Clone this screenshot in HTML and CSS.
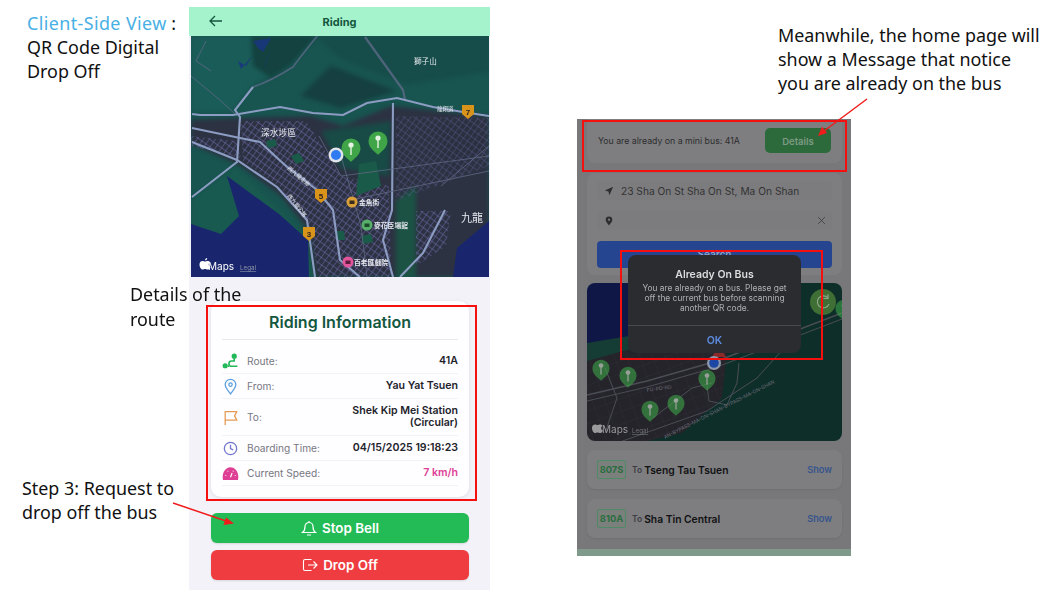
FILE: index.html
```html
<!DOCTYPE html>
<html lang="en">
<head>
    <meta charset="UTF-8">
    <meta name="viewport" content="width=device-width, initial-scale=1.0">
    <title>QR Code Digital Drop Off</title>
    <link rel="stylesheet" href="styles.css">
</head>
<body>
    <svg class="defs" width="0" height="0">
        <defs>
            <symbol id="pin" viewBox="0 0 20 24">
                <path d="M10 24 C8.500 21.500 0.500 18 0.500 10 A9.500 9.500 0 0 1 19.500 10 C19.500 18 11.500 21.500 10 24Z" fill="#3fa548"/>
                <circle cx="10" cy="7" r="2.600" fill="#e4f3e2"/>
                <rect x="9.300" y="8" width="1.400" height="9" fill="#e4f3e2"/>
            </symbol>
            <pattern id="streets" width="5" height="6" patternUnits="userSpaceOnUse" patternTransform="rotate(36)">
                <path d="M0 0H5M0 0V6" stroke="#7a70b8" stroke-width=".9" fill="none"/>
            </pattern>
            <pattern id="streets-dim" width="12" height="12" patternUnits="userSpaceOnUse" patternTransform="rotate(-20)">
                <path d="M0 0H12M0 0V12" stroke="#33333a" stroke-width=".6" fill="none"/>
            </pattern>
        </defs>
    </svg>

    <p class="note note-title"><span class="note-link">Client-Side View</span> :<br>QR Code Digital<br>Drop Off</p>
    <p class="note note-step">Step 3: Request to<br>drop off the bus</p>
    <p class="note note-home">Meanwhile, the home page will<br>show a Message that notice<br>you are already on the bus</p>

    <!-- riding screen -->
    <section class="phone riding">
        <header class="top-bar">
            <svg class="back" viewBox="0 0 14 12" width="14" height="12"><path d="M13 6H1.500M6 1 1 6l5 5" fill="none" stroke="#14573f" stroke-width="1.300"/></svg>
            <span>Riding</span>
        </header>
        <div class="map">
            <svg viewBox="0 0 298 241" width="298" height="241">
                <rect width="298" height="241" fill="#185450"/>
                <g class="soft">
                    <path d="M0 0H120L100 25 60 50 40 75H0Z" fill="#1a5c58"/>
                    <path d="M60 0H125L100 28 80 42 62 30Z" fill="#134240"/>
                    <path d="M125 0H298V35L215 48 150 22Z" fill="#164c49"/>
                    <path d="M140 30 L205 55 L150 72 L110 60Z" fill="#153f40"/>
                    <path d="M44 82 L120 80 L152 90 L200 70 L298 80 V241 H124 L118 195 L90 160 L50 130 L0 108 V84Z" fill="#2c3242"/>
                    <path d="M130 95 L200 85 L198 140 L150 132Z" fill="#184a46"/>
                    <path d="M0 165 L45 132 L115 200 L124 241 H0Z" fill="#195a50"/>
                    <path d="M205 165 L225 150 L225 241 H205Z" fill="#1b5244"/>
                    <path d="M240 90 L280 85 L298 110 L260 140Z" fill="#2a3040"/>
                </g>
                <path d="M62 5 L80 2 L72 16 L67 12Z M47 25 L55 30 L61 20 L50 33Z M75 25 L80 15 L72 33Z" fill="#1a3580" opacity=".85"/>
                <path d="M50 85 L115 85 L150 140 L198 150 L200 241 L128 241 L118 190 L88 150 L52 125Z" fill="url(#streets)"/>
                <path d="M205 80 L298 82 V130 L245 150 L205 165Z" fill="url(#streets)" opacity=".6"/>
                <path d="M225 175 L260 175 L255 210 L225 230Z" fill="url(#streets)"/>
                <path d="M0 100 L45 105 L50 122 L0 110Z" fill="url(#streets)"/>
                <path d="M168 128 L185 125 L190 150 L165 160Z" fill="#1a5a48"/>
                <path d="M100 120l8-3 5 8-8 3zM75 105l9-2 2 7-9 2zM170 200l10-2 2 8-10 2zM145 195l8 0 1 9-8 0z" fill="#1a5a48"/>
                <path d="M36 140 L88 178 L117 204 L118 241 H0 V188 L30 198 L48 180Z" fill="#19266e"/>
                <path d="M298 185 L266 212 L262 241 H298Z" fill="#19266e"/>
                <g fill="none" stroke="#5c6a88" stroke-width="1.600" opacity=".8">
                    <path d="M127 -1 Q110 20 102 31 Q80 45 62 51"/>
                    <path d="M174 1 L212 54 L214 64" stroke-width="2.200"/>
                </g>
                <g fill="none" stroke="#8c9cc2" stroke-width="2.100">
                    <path d="M62 51 L44 74 L49 81 L46 126 L1 161"/>
                    <path d="M1 78 L9 79 L42 79 L89 71 L122 77 L152 79 L176 67 L206 62 L242 71 L272 76 L298 80"/>
                    <path d="M1 92 L49 102 L69 106 L96 131 L126 154 L142 174 L149 224 L169 241"/>
                    <path d="M1 106 L46 124 L86 151 L116 184 L124 241"/>
                    <path d="M202 67 L201 174 L192 204 L202 241"/>
                    <path d="M254 174 L232 217 L209 241"/>
                </g>
                <g fill="none" stroke="#5f6885" stroke-width=".8">
                    <path d="M128 100 L150 140 L298 120"/>
                    <path d="M155 165 L298 135"/>
                    <path d="M150 120 L170 190 L176 241"/>
                    <path d="M250 150 L298 110"/>
                    <path d="M0 40 L30 65 L44 78"/>
                    <path d="M15 5 L5 25 L20 35"/>
                </g>
                <g class="shield">
                    <path d="M271 69h12v9l-6 5-6-5z" fill="#d8941a"/><text x="277" y="79">7</text>
                    <path d="M124 153h12v9l-6 5-6-5z" fill="#d8941a"/><text x="130" y="163">5</text>
                    <path d="M112 191h12v9l-6 5-6-5z" fill="#d8941a"/><text x="118" y="201">3</text>
                </g>
                <text class="map-label big" x="70" y="100">深水埗區</text>
                <text class="map-label" x="223" y="28">獅子山</text>
                <text class="map-label huge" x="270" y="186">九龍</text>
                <text class="map-label road" transform="translate(96 133) rotate(40)">西九龍走廊</text>
                <text class="map-label road" transform="translate(96 160) rotate(52)">西九龍公路</text>
                <text class="map-label road" x="246" y="75">龍翔道</text>
                <circle cx="161" cy="166" r="5.500" fill="#d9a03a"/><rect x="158.500" y="164.500" width="5" height="3.500" fill="#3a2c1a"/><text class="map-label poi" x="168" y="169">金魚街</text>
                <circle cx="176" cy="189" r="5.500" fill="#56b06a"/><rect x="173.500" y="187.500" width="5" height="3.500" fill="#1c4a2a"/><text class="map-label poi" x="183" y="192">麥花臣場館</text>
                <circle cx="157" cy="226" r="5.500" fill="#e2559b"/><rect x="154.500" y="224.500" width="5" height="3.500" fill="#5a1c3e"/><text class="map-label poi" x="163" y="229">百老匯戲院</text>
                <use href="#pin" x="150" y="102" width="20" height="24"/>
                <use href="#pin" x="177" y="95" width="20" height="24"/>
                <circle cx="145" cy="119" r="7.500" fill="#dfe3ea"/>
                <circle cx="145" cy="119" r="5" fill="#2f7bf2"/>
                <g transform="translate(3.500 1.500)">
                    <path d="M13 232c-1 0-1.500-.600-2.500-.600s-1.500.600-2.500.600c-1.500 0-3-2.500-3-5s1.500-3.500 3-3.500c1 0 1.700.600 2.500.600s1.500-.600 2.700-.600c1 0 1.800.500 2.300 1.200-2 1.300-1.600 4 .500 4.900-.500 1.200-1.400 2.400-2.500 2.400zM10.500 222.800c0-1.300 1-2.300 2.200-2.400.100 1.300-1 2.500-2.200 2.400z" fill="#fff"/>
                </g>
                <text class="maps-word" x="17" y="234">Maps</text>
                <text class="legal" x="49" y="234">Legal</text>
            </svg>
        </div>
        <div class="riding-body">
            <div class="info-card">
                <h2>Riding Information</h2>
                <div class="info-row">
                    <svg class="row-icon" viewBox="0 0 16 16"><g fill="none" stroke="#22b85a" stroke-width="1.500"><circle cx="3" cy="12" r="1.700" fill="#22b85a"/><circle cx="11.500" cy="3" r="1.700" fill="#22b85a"/><path d="M11.500 5v2.500H9a2.200 2.200 0 0 0 0 5h5.500M5.500 12.500h1"/></g></svg>
                    <span class="row-label">Route:</span><span class="row-value">41A</span>
                </div>
                <div class="info-row">
                    <svg class="row-icon" viewBox="0 0 16 16"><g fill="none" stroke="#5b9fe0" stroke-width="1.200"><path d="M8 15C6 12 3 9.500 3 6.200a5 5 0 0 1 10 0C13 9.500 10 12 8 15Z"/><circle cx="8" cy="6.200" r="1.600"/></g></svg>
                    <span class="row-label">From:</span><span class="row-value">Yau Yat Tsuen</span>
                </div>
                <div class="info-row">
                    <svg class="row-icon" viewBox="0 0 16 16"><path d="M3 15V2.500H14L11.800 6.500 14 10.500H3" fill="none" stroke="#e59a52" stroke-width="1.200" stroke-linejoin="round"/></svg>
                    <span class="row-label">To:</span><span class="row-value">Shek Kip Mei Station<br>(Circular)</span>
                </div>
                <div class="info-row">
                    <svg class="row-icon" viewBox="0 0 16 16"><g fill="none" stroke="#7277cc" stroke-width="1.200"><circle cx="8" cy="8" r="5.800"/><path d="M8 4.500V8l2.500 1.300"/></g></svg>
                    <span class="row-label">Boarding Time:</span><span class="row-value">04/15/2025 19:18:23</span>
                </div>
                <div class="info-row">
                    <svg class="row-icon" viewBox="0 0 16 16"><path d="M1 14C-.5 8 3 2 8 2s8.500 6 7 12Z" fill="#de3f95"/><path d="M8 11.500l1.500-4M3.500 9.500v.6M12.500 9.500v.6M5.500 5.500v.6M10.500 5.500v.6" stroke="#fff" stroke-width="1.100"/></svg>
                    <span class="row-label">Current Speed:</span><span class="row-value speed">7 km/h</span>
                </div>
            </div>
            <button class="action stop">
                <svg viewBox="0 0 16 16" width="16" height="16"><path d="M1.500 12.500c1.500-1 2.500-2.500 2.500-6a4 4 0 0 1 8 0c0 3.500 1 5 2.500 6ZM6 15h4M8 1v1.500" fill="none" stroke="#fff" stroke-width="1.200"/></svg>
                Stop Bell
            </button>
            <button class="action drop">
                <svg viewBox="0 0 16 16" width="16" height="16"><path d="M9.500 2.500H3a1.500 1.500 0 0 0-1.500 1.500v8A1.500 1.500 0 0 0 3 13.500h6.500M6 8h9M11.500 4.500 15 8l-3.500 3.500" fill="none" stroke="#fff" stroke-width="1.100"/></svg>
                Drop Off
            </button>
        </div>
    </section>

    <p class="note note-route">Details of the<br>route</p>

    <!-- home screen behind the alert -->
    <section class="phone home">
        <div class="banner">
            <span>You are already on a mini bus: 41A</span>
            <span class="details-btn">Details</span>
        </div>
        <div class="search-card">
            <div class="field">
                <svg viewBox="0 0 12 12" width="10" height="10"><path d="M11 1 6.500 11 5.300 6.700 1 5.500Z" fill="#2d2d2f"/></svg>
                <span>23 Sha On St Sha On St, Ma On Shan</span>
            </div>
            <div class="field">
                <svg viewBox="0 0 12 12" width="10" height="12"><path d="M6 11.500C4.500 9 2 7 2 4.500a4 4 0 0 1 8 0C10 7 7.500 9 6 11.500Z" fill="#2d2d2f"/><circle cx="6" cy="4.500" r="1.400" fill="#77777a"/></svg>
                <svg class="clear" viewBox="0 0 12 12" width="9" height="9"><path d="M1.500 1.500l9 9M10.500 1.500l-9 9" stroke="#3a3a3c" stroke-width="1.100"/></svg>
            </div>
            <div class="search-btn">Search</div>
        </div>
        <div class="map home-map">
            <svg viewBox="0 0 255 158" width="255" height="158">
                <rect width="255" height="158" fill="#0e2e2a"/>
                <path d="M0 0 H120 L60 50 L0 76Z" fill="#0e1746"/>
                <path d="M0 78 L120 40 L140 70 L135 115 L95 150 L60 158 H0Z" fill="#25242b"/>
                <path d="M0 78 L120 40 L140 70 L135 115 L95 150 L60 158 H0Z" fill="url(#streets-dim)"/>
                <path d="M0 60 L60 50 L120 10 V45 L0 78Z" fill="#163d35"/>
                <g fill="none" stroke="#4b4d55" stroke-width="1">
                    <path d="M0 112 L60 98 L130 78 L255 30" stroke-width="1.400"/>
                    <path d="M0 118 L60 104 L130 84 L255 36"/>
                    <path d="M18 85 L30 115 L18 150"/>
                    <path d="M66 135 L105 105 L125 100"/>
                    <path d="M30 160 L120 128 L170 95 L215 45"/>
                    <path d="M120 103 L122 118 L140 122 L150 100 L152 80"/>
                </g>
                <text class="bypass" transform="translate(78 156) rotate(-27)">AN-BYPASS-MA-ON-SHAN-BYPASS-MA-ON-SHAN</text>
                <text class="bypass" transform="translate(60 109) rotate(-8)">FU-PO-RD</text>
                <path d="M125 74l5-9h4l5 9Z" fill="#8c2a2a"/>
                <circle cx="127" cy="80" r="7" fill="#8f98ab"/>
                <circle cx="127" cy="80" r="4.800" fill="#1c47a4"/>
                <g class="dim-pins">
                    <use href="#pin" x="5" y="76" width="18" height="22"/>
                    <use href="#pin" x="32" y="83" width="18" height="22"/>
                    <use href="#pin" x="111" y="86" width="18" height="22"/>
                    <use href="#pin" x="80" y="111" width="18" height="22"/>
                    <use href="#pin" x="54" y="117" width="18" height="22"/>
                    <use href="#pin" x="248" y="16" width="18" height="22"/>
                </g>
                <circle cx="236" cy="19" r="13" fill="#3f6f34"/>
                <path d="M241 15a6 6 0 1 0 1 6M241 11v4.500h-4.500" fill="none" stroke="#8fa78a" stroke-width="1.100"/>
                <path d="M13 150c-1 0-1.500-.600-2.500-.600s-1.500.600-2.500.600c-1.500 0-3-2.500-3-5s1.500-3.500 3-3.500c1 0 1.700.600 2.500.600s1.500-.600 2.700-.600c1 0 1.800.500 2.300 1.200-2 1.300-1.600 4 .500 4.900-.500 1.200-1.400 2.400-2.500 2.400z" fill="#9a9a9c"/>
                <text class="maps-word dim" x="15" y="150">Maps</text>
                <text class="legal dim" x="45" y="150">Legal</text>
            </svg>
        </div>
        <div class="route-row">
            <span class="route-code">807S</span>
            <span class="route-to">To</span>
            <span class="route-name">Tseng Tau Tsuen</span>
            <span class="route-show">Show</span>
        </div>
        <div class="route-row">
            <span class="route-code">810A</span>
            <span class="route-to">To</span>
            <span class="route-name">Sha Tin Central</span>
            <span class="route-show">Show</span>
        </div>
        <div class="tab-bar"></div>
    </section>

    <div class="alert">
        <div class="alert-body">
            <h3>Already On Bus</h3>
            <p>You are already on a bus. Please get<br>off the current bus before scanning<br>another QR code.</p>
        </div>
        <div class="alert-ok">OK</div>
    </div>

    <!-- red callouts -->
    <div class="callout callout-card"></div>
    <div class="callout callout-banner"></div>
    <div class="callout callout-alert"></div>
    <svg class="arrows" width="1051" height="590" viewBox="0 0 1051 590">
        <path d="M173 503 L226 521" stroke="#f01c1c" stroke-width="1.500"/>
        <path d="M234 523.500 L223.500 525 L226 517.500Z" fill="#f01c1c"/>
        <path d="M867 99 L824 131" stroke="#f01c1c" stroke-width="1.500"/>
        <path d="M818 136 L822 126.500 L827 133Z" fill="#f01c1c"/>
    </svg>
</body>
</html>
```

FILE: styles.css
```css
html, body {
    margin: 0;
    padding: 0;
}
body {
    position: relative;
    width: 1051px;
    height: 590px;
    overflow: hidden;
    background: #fff;
    font-family: Inter, "Liberation Sans", sans-serif;
}
.defs {
    position: absolute;
}

/* slide notes */
.note {
    position: absolute;
    margin: 0;
    font-family: "Noto Sans", sans-serif;
    font-size: 17.900px;
    line-height: 24px;
    color: #111;
}
.note-title { left: 27px; top: 11px; }
.note-link { color: #47b0e4; letter-spacing: 0.4px; }
.note-route { left: 130px; top: 282px; line-height: 25px; z-index: 2; }
.note-step { left: 22px; top: 476px; }
.note-home { left: 778px; top: 23px; }

/* phones */
.phone {
    position: absolute;
    display: flex;
    flex-direction: column;
    box-sizing: border-box;
    overflow: hidden;
}
.map {
    overflow: hidden;
}
.map svg {
    display: block;
    filter: blur(0.5px);
}
.soft {
    filter: blur(2px);
}

/* riding screen */
.riding {
    left: 189px;
    top: 7px;
    width: 301px;
    height: 583px;
    background: #f3f2f8;
}
.top-bar {
    position: relative;
    height: 29px;
    flex: none;
    display: flex;
    align-items: center;
    justify-content: center;
    background: #a5f3cd;
    color: #14573f;
    font-size: 11px;
    font-weight: 700;
}
.back {
    position: absolute;
    left: 20px;
    top: 8px;
}
.riding .map {
    height: 241px;
    flex: none;
    margin: 0 1px 0 2px;
}
.riding-body {
    padding: 24px 21px 0 22px;
    display: flex;
    flex-direction: column;
}
.info-card {
    height: 196px;
    box-sizing: border-box;
    padding: 9px 11px 0;
    background: #fefdff;
    border-radius: 10px;
    box-shadow: 0 1px 4px rgba(0, 0, 0, 0.09);
}
.info-card h2 {
    margin: 0;
    height: 29px;
    font-size: 16px;
    line-height: 24px;
    font-weight: 600;
    text-align: center;
    color: #14573f;
    border-bottom: 1px solid #e8e8ec;
}
.info-row {
    display: flex;
    align-items: center;
    padding: 6px 0;
    border-bottom: 1px solid #f3f3f6;
    font-size: 10.200px;
    line-height: 12px;
}
.info-card h2 + .info-row {
    margin-top: 9px;
}
.row-icon {
    width: 17px;
    height: 17px;
    margin: -3px 8px -3px 0;
    flex: none;
}
.row-label {
    color: #77787f;
}
.row-value {
    margin-left: auto;
    font-size: 10.600px;
    font-weight: 600;
    color: #22232b;
    text-align: right;
}
.row-value.speed {
    color: #de3f95;
}
.action {
    height: 30px;
    border: none;
    border-radius: 6px;
    display: flex;
    align-items: center;
    justify-content: center;
    gap: 5px;
    color: #fff;
    font-family: inherit;
    font-size: 13.400px;
    font-weight: 600;
    padding: 0;
    box-shadow: 0 1px 2px rgba(0, 0, 0, 0.12);
}
.stop {
    margin-top: 16px;
    background: #22bb55;
}
.drop {
    margin-top: 7px;
    background: #ee3c40;
}

/* home screen, dimmed by the alert */
.home {
    left: 577px;
    top: 119px;
    width: 274px;
    height: 437px;
    padding: 0 9px 0 10px;
    background: #78787b;
    filter: blur(0.35px);
}
.banner {
    height: 44px;
    flex: none;
    box-sizing: border-box;
    padding: 9px 11px 10px;
    display: flex;
    align-items: center;
    justify-content: space-between;
    background: #7e7e80;
    border-radius: 0 0 8px 8px;
    font-size: 8.750px;
    color: #2d2d2f;
}
.details-btn {
    width: 66px;
    height: 25px;
    border-radius: 5px;
    background: #2c6a3c;
    color: #7d9a83;
    font-size: 9.500px;
    font-weight: 600;
    text-align: center;
    line-height: 27px;
}
.search-card {
    margin-top: 10px;
    height: 102px;
    flex: none;
    box-sizing: border-box;
    padding: 8px 10px;
    display: flex;
    flex-direction: column;
    gap: 11px;
    background: #7e7e80;
    border-radius: 8px;
    overflow: hidden;
}
.field {
    height: 19px;
    flex: none;
    display: flex;
    align-items: center;
    gap: 7px;
    padding: 0 7px;
    background: #7c7c7e;
    border-radius: 4px;
    font-size: 10.200px;
    color: #333335;
}
.clear {
    margin-left: auto;
    margin-right: -1px;
}
.search-btn {
    height: 27px;
    flex: none;
    border-radius: 4px;
    background: #264590;
    color: #8ea0c6;
    font-size: 10px;
    font-weight: 600;
    text-align: center;
    line-height: 27px;
}
.home-map {
    margin-top: 8px;
    height: 158px;
    flex: none;
    border-radius: 8px;
}
.dim-pins {
    opacity: 0.6;
}
.route-row {
    margin-top: 9px;
    height: 39px;
    flex: none;
    box-sizing: border-box;
    padding: 0 10px;
    display: flex;
    align-items: center;
    background: #7e7e80;
    border-radius: 8px;
    box-shadow: 0 1px 2px rgba(0, 0, 0, 0.08);
}
.route-row + .route-row {
    margin-top: 10px;
}
.route-code {
    width: 27px;
    height: 17px;
    border: 1px solid #4f8a66;
    border-radius: 2px;
    background: #7c807d;
    color: #2a6e40;
    font-size: 9.300px;
    font-weight: 700;
    text-align: center;
    line-height: 18px;
}
.route-to {
    margin-left: 6px;
    font-size: 8.500px;
    font-weight: 600;
    color: #3d3d40;
}
.route-name {
    margin-left: 2px;
    font-size: 10.300px;
    font-weight: 600;
    color: #111113;
}
.route-show {
    margin-left: auto;
    font-size: 9.200px;
    font-weight: 600;
    color: #36548c;
}
.tab-bar {
    margin: auto -9px 0 -10px;
    height: 7px;
    flex: none;
    background: #7f9a8b;
}

/* alert sits over the home screen */
.alert {
    position: absolute;
    left: 628px;
    top: 255px;
    width: 173px;
    height: 98px;
    background: #2b2c2f;
    border-radius: 8px;
    display: flex;
    flex-direction: column;
    text-align: center;
    filter: blur(0.25px);
}
.alert-body {
    height: 71px;
    box-sizing: border-box;
    padding: 13px 6px 0;
    border-bottom: 1px solid #48494d;
}
.alert-body h3 {
    margin: 0 0 1px;
    font-size: 10.500px;
    line-height: 14px;
    font-weight: 600;
    color: #dcdcde;
}
.alert-body p {
    margin: 0;
    font-size: 8.400px;
    line-height: 10px;
    color: #b0b0b3;
}
.alert-ok {
    flex: 1;
    display: flex;
    align-items: center;
    justify-content: center;
    padding-top: 1px;
    color: #5b8ce0;
    font-size: 10.500px;
    font-weight: 600;
}

/* red boxes and arrows from the slide */
.callout {
    position: absolute;
    box-sizing: border-box;
    border: 2px solid #f50f0f;
}
.callout-card { left: 206px; top: 305px; width: 271px; height: 196px; }
.callout-banner { left: 582px; top: 120px; width: 265px; height: 52px; }
.callout-alert { left: 620px; top: 250px; width: 203px; height: 110px; }
.arrows {
    position: absolute;
    left: 0;
    top: 0;
}

/* map text */
.map-label {
    font-family: "Noto Sans CJK TC", sans-serif;
    fill: #e6e8ee;
    font-size: 7.600px;
}
.map-label.big { font-size: 8.750px; }
.map-label.huge { font-size: 11px; }
.map-label.road { font-size: 5.500px; }
.map-label.poi { font-size: 6.800px; font-weight: 700; }
.shield text {
    font-family: "Liberation Sans", sans-serif;
    font-size: 8px;
    font-weight: 700;
    fill: #2b2320;
    text-anchor: middle;
}
.maps-word {
    font-family: Inter, sans-serif;
    font-size: 10px;
    fill: #fff;
}
.maps-word.dim { fill: #9a9a9c; }
.legal {
    font-family: Inter, sans-serif;
    font-size: 6.300px;
    fill: #8d93a6;
    text-decoration: underline;
}
.legal.dim { fill: #6f7175; }
.bypass {
    font-family: Inter, sans-serif;
    font-size: 5px;
    fill: #6b6d75;
}
```
